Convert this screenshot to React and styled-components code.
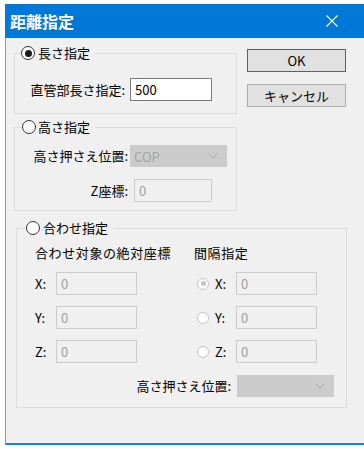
import React from 'react';
import styled, { createGlobalStyle } from 'styled-components';

// -------------- CSS Style -------------- //
const GlobalStyle = createGlobalStyle`
    body {
        margin: 0;
        background: #ffffff;
        font-family: "Noto Sans CJK JP", "Noto Sans", sans-serif;
        font-size: 13px;
        color: #000000;
    }
`;

const Page = styled.div`
    padding: 4px 0 0 5px;
`;

const Window = styled.div`
    width: 359px;
    height: 441px;
    display: flex;
    flex-direction: column;
`;

const TitleBar = styled.div`
    height: 34px;
    flex-shrink: 0;
    background: #0078d7;
    display: flex;
    align-items: center;
    justify-content: space-between;
    padding: 0 26px 0 5px;
`;

const Title = styled.span`
    color: #ffffff;
    font-size: 16px;
    font-weight: bold;
    letter-spacing: 0;
`;

const Body = styled.div`
    flex: 1;
    background: #f0f0f0;
    border-left: 1px solid #5ea6e6;
    border-bottom: 2px solid #1883d7;
    padding: 7px 0 0 8px;
`;

const TopRow = styled.div`
    display: flex;
    gap: 10px;
`;

const LeftCol = styled.div`
    width: 223px;
    display: flex;
    flex-direction: column;
    gap: 5px;
`;

const ButtonCol = styled.div`
    width: 99px;
    display: flex;
    flex-direction: column;
    gap: 12px;
    padding-top: 4px;
`;

const Button = styled.button`
    height: 23px;
    margin: 0;
    padding: 0;
    box-sizing: border-box;
    background: #e1e1e1;
    border: 1px solid ${p => (p.$default ? '#0078d7' : '#adadad')};
    font-family: inherit;
    font-size: 13px;
    line-height: 20px;
    color: #000000;
`;

const Group = styled.fieldset`
    margin: 0 0 0 ${p => p.$offset || 0}px;
    padding: 0;
    min-inline-size: 0;
    width: ${p => p.$width}px;
    box-sizing: border-box;
    border: 1px solid #dcdcdc;
`;

const Legend = styled.legend`
    margin-left: ${p => p.$shift}px;
    padding: 0 5px 0 1px;
    height: 16px;
    line-height: 16px;
    display: flex;
    align-items: center;
    gap: ${p => p.$gap || 3}px;
`;

const GroupInner = styled.div`
    padding: ${p => p.$pad};
    display: flex;
    flex-direction: column;
    gap: ${p => p.$gap || 0}px;
`;

const Row = styled.div`
    display: flex;
    align-items: center;
    height: ${p => p.$h || 23}px;
    justify-content: ${p => (p.$end ? 'flex-end' : 'flex-start')};
    padding-right: ${p => p.$pr || 0}px;
    gap: ${p => p.$gap || 0}px;
`;

const FieldLabel = styled.span`
    width: ${p => p.$w}px;
    flex-shrink: 0;
    text-align: ${p => (p.$left ? 'left' : 'right')};
    padding-right: ${p => p.$pr || 0}px;
    box-sizing: border-box;
    white-space: nowrap;
    line-height: 16px;
`;

const TextBox = styled.div`
    width: ${p => p.$w}px;
    height: 23px;
    margin-left: ${p => p.$ml || 0}px;
    box-sizing: border-box;
    border: 1px solid ${p => (p.$disabled ? '#cccccc' : '#7a7a7a')};
    background: ${p => (p.$disabled ? '#f0f0f0' : '#ffffff')};
    color: ${p => (p.$disabled ? '#a0a0a0' : '#000000')};
    padding-left: 4px;
    font-size: 13px;
    line-height: 21px;
    flex-shrink: 0;
`;

const Combo = styled.div`
    width: ${p => p.$w}px;
    height: 22px;
    box-sizing: border-box;
    background: #cccccc;
    color: #a3a3a3;
    display: flex;
    align-items: center;
    justify-content: space-between;
    padding: 0 9px 0 4px;
    font-size: 13px;
    flex-shrink: 0;
`;

const Radio = styled.span`
    width: ${p => p.$size || 13}px;
    height: ${p => p.$size || 13}px;
    box-sizing: border-box;
    border-radius: 50%;
    border: 1px solid ${p => (p.$disabled ? '#c4c4c4' : '#333333')};
    background: #ffffff;
    display: flex;
    align-items: center;
    justify-content: center;
    flex-shrink: 0;

    &::after {
        content: '';
        display: ${p => (p.$checked ? 'block' : 'none')};
        width: ${p => (p.$disabled ? 5 : 7)}px;
        height: ${p => (p.$disabled ? 5 : 7)}px;
        border-radius: 50%;
        background: ${p => (p.$disabled ? '#c4c4c4' : '#1a1a1a')};
    }
`;

const RadioSlot = styled.span`
    width: 21px;
    display: flex;
    padding-left: 3px;
    box-sizing: border-box;
    flex-shrink: 0;
`;

const Columns = styled.div`
    display: flex;
`;

const Column = styled.div`
    width: ${p => p.$w}px;
    flex-shrink: 0;
    display: flex;
    align-items: center;
`;

const Heading = styled.span`
    line-height: 16px;
    white-space: nowrap;
    letter-spacing: ${p => p.$ls || 0}px;
`;

const Chevron = () => (
    <svg width="10" height="6" viewBox="0 0 10 6">
        <polyline points="0.5,0.5 5,5 9.5,0.5" fill="none" stroke="#a6a6a6" strokeWidth="1" />
    </svg>
);

const CloseIcon = () => (
    <svg width="12" height="12" viewBox="0 0 12 12">
        <path d="M0.5 0.5 L11.5 11.5 M11.5 0.5 L0.5 11.5" stroke="#ffffff" strokeWidth="1.1" />
    </svg>
);

const CoordRow = ({ axis, checked }) => (
    <Columns>
        <Column $w={159}>
            <FieldLabel $w={21} $left>{axis}:</FieldLabel>
            <TextBox $w={81} $disabled>0</TextBox>
        </Column>
        <Column $w={140}>
            <RadioSlot><Radio $size={12} $disabled $checked={checked} /></RadioSlot>
            <FieldLabel $w={21} $left>{axis}:</FieldLabel>
            <TextBox $w={81} $disabled>0</TextBox>
        </Column>
    </Columns>
);

const App = () => {
    return (
        <Page>
            <GlobalStyle />
            <Window>
                <TitleBar>
                    <Title>距離指定</Title>
                    <CloseIcon />
                </TitleBar>
                <Body>
                    <TopRow>
                        <LeftCol>
                            <Group $width={223}>
                                <Legend $shift={5}>
                                    <Radio $size={14} $checked />長さ指定
                                </Legend>
                                <GroupInner $pad="17px 0 12px 0">
                                    <Row>
                                        <FieldLabel $w={115} $pr={5}>直管部長さ指定:</FieldLabel>
                                        <TextBox $w={82}>500</TextBox>
                                    </Row>
                                </GroupInner>
                            </Group>
                            <Group $width={223}>
                                <Legend $shift={6} $gap={2}>
                                    <Radio $size={14} />高さ指定
                                </Legend>
                                <GroupInner $pad="10px 0 8px 0" $gap={12}>
                                    <Row $h={22}>
                                        <FieldLabel $w={115} $pr={2}>高さ押さえ位置:</FieldLabel>
                                        <Combo $w={97}>COP<Chevron /></Combo>
                                    </Row>
                                    <Row>
                                        <FieldLabel $w={115} $pr={2}>Z座標:</FieldLabel>
                                        <TextBox $w={78} $ml={4} $disabled>0</TextBox>
                                    </Row>
                                </GroupInner>
                            </Group>
                        </LeftCol>
                        <ButtonCol>
                            <Button $default>OK</Button>
                            <Button>キャンセル</Button>
                        </ButtonCol>
                    </TopRow>
                    <Group $width={331} $offset={2} style={{ marginTop: 9 }}>
                        <Legend $shift={8}>
                            <Radio $size={14} />合わせ指定
                        </Legend>
                        <GroupInner $pad="9px 0 10px 18px" $gap={11}>
                            <Columns>
                                <Column $w={159}><Heading $ls={0.6}>合わせ対象の絶対座標</Heading></Column>
                                <Column $w={140}><Heading $ls={0.6}>間隔指定</Heading></Column>
                            </Columns>
                            <CoordRow axis="X" checked />
                            <CoordRow axis="Y" />
                            <CoordRow axis="Z" />
                            <Row $end $pr={12} $gap={6}>
                                <FieldLabel $w={100}>高さ押さえ位置:</FieldLabel>
                                <Combo $w={97}><span /><Chevron /></Combo>
                            </Row>
                        </GroupInner>
                    </Group>
                </Body>
            </Window>
        </Page>
    );
};

export default App;
